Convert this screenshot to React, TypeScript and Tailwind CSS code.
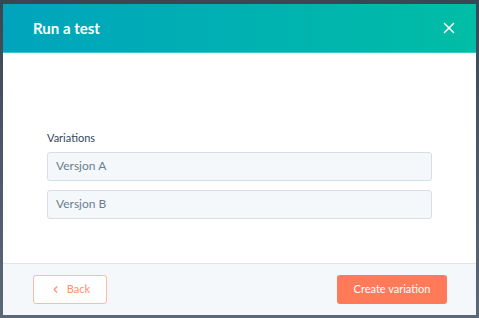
import React from 'react';
import { X, ChevronLeft } from 'lucide-react';

const variations = ['Versjon A', 'Versjon B'];

const App: React.FC = () => {
  return (
    <div
      className="w-[479px] h-[318px] pt-[4px] pl-[3px] bg-gradient-to-b from-[#3b4654] via-[#4c5968] to-[#5b6878]"
      style={{ fontFamily: 'Lato, "Open Sans", sans-serif' }}
    >
      <div className="w-[473px] h-[311px] flex flex-col bg-white">
        {/* Header */}
        <div className="h-[49px] flex items-center justify-between pl-[30px] pr-[18px] bg-gradient-to-r from-[#00a4bd] to-[#00bda5] border-b border-[#3fc7c9]">
          <h2 className="text-white text-[15px] font-bold">Run a test</h2>
          <button className="text-white">
            <X size={18} strokeWidth={2.2} />
          </button>
        </div>

        {/* Body */}
        <div className="flex-1 pl-[44px] pr-[44px] pt-[77px]">
          <label className="block text-[11px] text-[#33475b] mb-[5px]">Variations</label>
          <div className="flex flex-col gap-[9px]">
            {variations.map((v) => (
              <div
                key={v}
                className="h-[29px] flex items-center px-[8px] bg-[#f5f8fa] border border-[#d6dfe8] rounded-[3px] text-[12px] text-[#6a7d92]"
              >
                {v}
              </div>
            ))}
          </div>
        </div>

        {/* Footer */}
        <div className="h-[52px] flex items-center justify-between pl-[30px] pr-[29px] bg-[#f5f8fa] border-t border-[#dfe3eb]">
          <button className="w-[74px] h-[29px] flex items-center justify-center gap-[6px] bg-white border border-[#ffb9a6] rounded-[3px] text-[#ff8f73] text-[11px]">
            <ChevronLeft size={11} strokeWidth={2.5} />
            Back
          </button>
          <button className="w-[110px] h-[29px] flex items-center justify-center bg-[#ff7a59] rounded-[3px] text-white text-[11px]">
            Create variation
          </button>
        </div>
      </div>
    </div>
  );
};

export default App;
